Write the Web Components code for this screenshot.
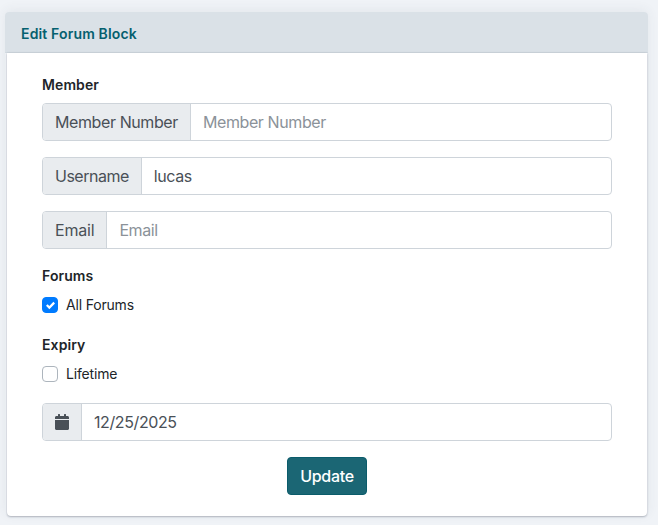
<!DOCTYPE html>
<html><head><meta charset="utf-8"><style>
html,body{margin:0;padding:0;background:#f0f3f7;}
body{font-family:Inter,"Liberation Sans",sans-serif;color:#212529;font-size:14px;}
forum-page{display:block;padding:12px 10px 8px 5px;}
</style></head><body>
<template id="t-card"><style>
:host{display:block;border-radius:4px;box-shadow:0 -2px 12px rgba(60,70,90,.07);}
header{background:#dae1e7;color:#05606f;font-weight:600;font-size:14px;letter-spacing:.15px;line-height:16px;height:41px;box-sizing:border-box;padding:14px 16px 0;border-radius:4px 4px 0 0;border-bottom:1px solid #d3dbe1;}
.b{margin:0 1px 0 2px;background:#fff;border-radius:0 0 4px 4px;box-shadow:0 1px 2px rgba(60,70,90,.3),0 0 2px rgba(60,70,90,.2);padding:21px 35px 21px 35px;display:flex;flex-direction:column;}
</style><header><slot name="title"></slot></header><div class="b"><slot></slot></div></template>

<template id="t-label"><style>
:host{display:block;font-weight:600;font-size:14px;letter-spacing:.1px;line-height:22px;color:#212529;margin-bottom:7px;}
</style><slot></slot></template>

<template id="t-group"><style>
:host{display:flex;height:38px;box-sizing:border-box;margin-bottom:16px;border:1px solid #ced4da;border-radius:4px;overflow:hidden;font-size:16px;letter-spacing:-.4px;line-height:24px;background:#fff;}
.a{display:flex;align-items:center;background:#e9ecef;color:#495057;padding:0 12px;border-right:1px solid #ced4da;}
.v{flex:1;display:flex;align-items:center;padding:0 12px;color:#495057;}
:host([placeholder]) .v{color:#8b9299;}
</style><div class="a"><slot name="addon"></slot></div><div class="v"><slot></slot></div></template>

<template id="t-check"><style>
:host{display:flex;align-items:center;gap:8px;font-size:14px;letter-spacing:-.18px;line-height:22px;color:#212529;height:22px;margin-bottom:18px;}
.c{width:16px;height:16px;box-sizing:border-box;border:1px solid #adb5bd;border-radius:4px;background:#fff;display:flex;align-items:center;justify-content:center;}
:host([checked]) .c{background:#007bff;border-color:#007bff;}
svg{display:none}
:host([checked]) svg{display:block}
</style><span class="c"><svg width="9" height="9" viewBox="0 0 8 8"><path fill="#fff" d="M6.564.75l-3.59 3.612-1.538-1.55L0 4.26 2.974 7.25 8 2.193z"/></svg></span><slot></slot></template>

<template id="t-btn"><style>
:host{display:block;width:80px;height:38px;box-sizing:border-box;align-self:center;background:#1b6674;border:1px solid #0b5c6b;border-radius:4px;color:#fff;font-size:16px;letter-spacing:-.3px;line-height:36px;text-align:center;font-weight:500;}
</style><slot></slot></template>

<forum-page>
<forum-card>
  <span slot="title">Edit Forum Block</span>
  <forum-label>Member</forum-label>
  <input-group placeholder><span slot="addon">Member Number</span>Member Number</input-group>
  <input-group><span slot="addon" style="letter-spacing:-.5px">Username</span>lucas</input-group>
  <input-group placeholder><span slot="addon" style="letter-spacing:-.2px">Email</span>Email</input-group>
  <forum-label>Forums</forum-label>
  <check-row checked>All Forums</check-row>
  <forum-label>Expiry</forum-label>
  <check-row>Lifetime</check-row>
  <input-group><span slot="addon" style="display:flex"><svg width="14" height="16" viewBox="0 0 448 512" fill="#495057"><path d="M0 464c0 26.5 21.5 48 48 48h352c26.5 0 48-21.5 48-48V192H0v272zM400 64h-48V16c0-8.800-7.200-16-16-16h-32c-8.800 0-16 7.200-16 16v48H160V16c0-8.800-7.200-16-16-16h-32c-8.800 0-16 7.200-16 16v48H48C21.500 64 0 85.500 0 112v48h448v-48c0-26.500-21.500-48-48-48z"/></svg></span>12/25/2025</input-group>
  <forum-button>Update</forum-button>
</forum-card>
</forum-page>
<script>
function def(name,id){customElements.define(name,class extends HTMLElement{constructor(){super();this.attachShadow({mode:'open'}).appendChild(document.getElementById(id).content.cloneNode(true));}});}
customElements.define('forum-page',class extends HTMLElement{constructor(){super();this.attachShadow({mode:'open'}).innerHTML='<slot></slot>';}});
def('forum-card','t-card');def('forum-label','t-label');def('input-group','t-group');def('check-row','t-check');def('forum-button','t-btn');
</script>
</body></html>
